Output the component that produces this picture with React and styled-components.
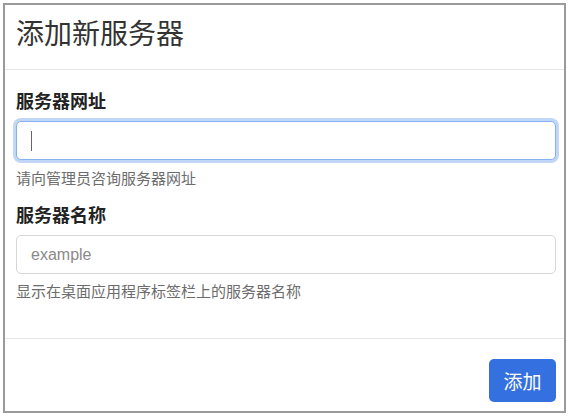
import React from "react";
import { styled, createGlobalStyle } from "styled-components";

const Global = createGlobalStyle`
  html, body {
    margin: 0;
    padding: 0;
    background: #fff;
  }
  body {
    font-family: "Liberation Sans", "Noto Sans CJK SC", sans-serif;
    color: #212529;
  }
`;

const Frame = styled.div`
  box-sizing: border-box;
  margin: 3px 2px 0 3px;
  width: 563px;
  height: 410px;
  border: 2px solid #9a9a9a;
  background: #fff;
  display: flex;
  flex-direction: column;
`;

const Header = styled.div`
  height: 64px;
  padding: 0 11px;
  display: flex;
  align-items: center;
  border-bottom: 1px solid #e6e6e6;
`;

const Title = styled.h1`
  margin: 0;
  margin-top: -10px;
  font-size: 28px;
  font-weight: 400;
  color: #333;
`;

const Body = styled.div`
  flex: 1;
  padding: 20px 8px 0 11px;
  display: flex;
  flex-direction: column;
`;

const Field = styled.div`
  display: flex;
  flex-direction: column;
  margin-bottom: ${(p) => p.$gap || 0}px;
`;

const Label = styled.label`
  font-size: 18px;
  font-weight: 700;
  color: #222;
  line-height: 24px;
  margin-bottom: 7px;
`;

const Input = styled.input`
  box-sizing: border-box;
  height: 39px;
  width: 100%;
  border: 1px solid ${(p) => (p.$focus ? "#86b1f0" : "#d6d6d6")};
  border-radius: 5px;
  padding: 0 14px;
  font-size: 16px;
  font-family: "Liberation Sans", "Noto Sans CJK SC", sans-serif;
  color: #333;
  outline: none;
  box-shadow: ${(p) => (p.$focus ? "0 0 0 3px rgba(120, 165, 240, 0.45)" : "none")};
  &::placeholder {
    color: #8a8a8a;
  }
`;

const Caret = styled.span`
  position: absolute;
  left: 15px;
  top: 10px;
  width: 1px;
  height: 20px;
  background: #666;
`;

const InputWrap = styled.div`
  position: relative;
`;

const Help = styled.div`
  font-size: 15px;
  color: #6c6c6c;
  margin-top: ${(p) => p.$top || 9}px;
  line-height: 20px;
`;

const Footer = styled.div`
  height: 72px;
  border-top: 1px solid #e6e6e6;
  display: flex;
  align-items: center;
  justify-content: flex-end;
  padding: 0 8px 0 0;
`;

const Button = styled.button`
  width: 67px;
  height: 43px;
  border: none;
  border-radius: 5px;
  background: #3470e0;
  color: #fff;
  font-size: 19px;
  font-family: "Liberation Sans", "Noto Sans CJK SC", sans-serif;
  margin-top: 10px;
`;

export default function App() {
  return (
    <>
      <Global />
      <Frame>
        <Header>
          <Title>添加新服务器</Title>
        </Header>
        <Body>
          <Field $gap={15}>
            <Label>服务器网址</Label>
            <InputWrap>
              <Input $focus readOnly />
              <Caret />
            </InputWrap>
            <Help>请向管理员咨询服务器网址</Help>
          </Field>
          <Field>
            <Label>服务器名称</Label>
            <Input placeholder="example" readOnly />
            <Help $top={8}>显示在桌面应用程序标签栏上的服务器名称</Help>
          </Field>
        </Body>
        <Footer>
          <Button>添加</Button>
        </Footer>
      </Frame>
    </>
  );
}
